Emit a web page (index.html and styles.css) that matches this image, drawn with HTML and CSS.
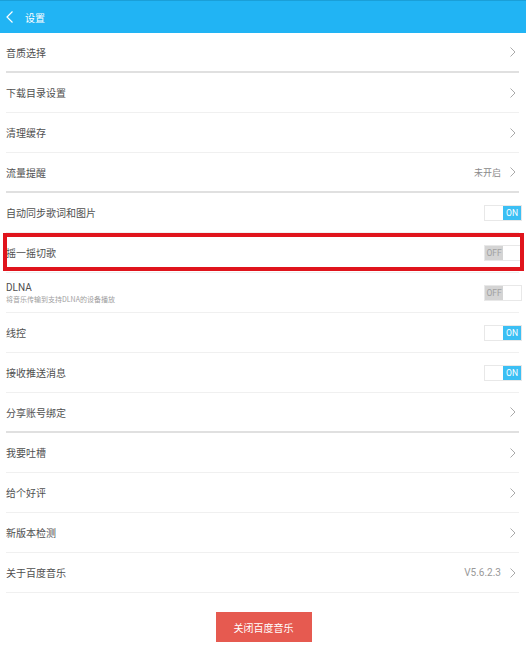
FILE: index.html
```html
<!DOCTYPE html>
<html lang="zh-CN">
<head>
  <meta charset="UTF-8">
  <meta name="viewport" content="width=device-width, initial-scale=1.0">
  <title>设置</title>
  <link rel="stylesheet" href="styles.css">
</head>
<body>
  <div class="header">
    <svg class="back" width="8" height="12" viewBox="0 0 8 12"><polyline points="6.5,0.5 1,6 6.5,11.5" fill="none" stroke="#fff" stroke-width="1.2"/></svg>
    <span class="title">设置</span>
  </div>

  <div class="settings">
    <div class="row group-end">
      <span class="label">音质选择</span>
      <svg class="chevron" width="6" height="10" viewBox="0 0 6 10"><polyline points="0.5,0.5 5,5 0.5,9.5" fill="none" stroke="#aaa" stroke-width="1"/></svg>
    </div>
    <div class="row">
      <span class="label">下载目录设置</span>
      <svg class="chevron" width="6" height="10" viewBox="0 0 6 10"><polyline points="0.5,0.5 5,5 0.5,9.5" fill="none" stroke="#aaa" stroke-width="1"/></svg>
    </div>
    <div class="row">
      <span class="label">清理缓存</span>
      <svg class="chevron" width="6" height="10" viewBox="0 0 6 10"><polyline points="0.5,0.5 5,5 0.5,9.5" fill="none" stroke="#aaa" stroke-width="1"/></svg>
    </div>
    <div class="row group-end">
      <span class="label">流量提醒</span>
      <span class="value">未开启</span>
      <svg class="chevron" width="6" height="10" viewBox="0 0 6 10"><polyline points="0.5,0.5 5,5 0.5,9.5" fill="none" stroke="#aaa" stroke-width="1"/></svg>
    </div>
    <div class="row">
      <span class="label">自动同步歌词和图片</span>
      <span class="toggle on"><span class="half"></span><span class="half">ON</span></span>
    </div>
    <div class="row marked">
      <span class="label">摇一摇切歌</span>
      <span class="toggle off"><span class="half">OFF</span><span class="half"></span></span>
      <span class="highlight"></span>
    </div>
    <div class="row">
      <div class="label-block">
        <span class="label dlna">DLNA</span>
        <span class="sub">将音乐传输到支持DLNA的设备播放</span>
      </div>
      <span class="toggle off"><span class="half">OFF</span><span class="half"></span></span>
    </div>
    <div class="row">
      <span class="label">线控</span>
      <span class="toggle on"><span class="half"></span><span class="half">ON</span></span>
    </div>
    <div class="row">
      <span class="label">接收推送消息</span>
      <span class="toggle on"><span class="half"></span><span class="half">ON</span></span>
    </div>
    <div class="row group-end">
      <span class="label">分享账号绑定</span>
      <svg class="chevron" width="6" height="10" viewBox="0 0 6 10"><polyline points="0.5,0.5 5,5 0.5,9.5" fill="none" stroke="#aaa" stroke-width="1"/></svg>
    </div>
    <div class="row">
      <span class="label">我要吐槽</span>
      <svg class="chevron" width="6" height="10" viewBox="0 0 6 10"><polyline points="0.5,0.5 5,5 0.5,9.5" fill="none" stroke="#aaa" stroke-width="1"/></svg>
    </div>
    <div class="row">
      <span class="label">给个好评</span>
      <svg class="chevron" width="6" height="10" viewBox="0 0 6 10"><polyline points="0.5,0.5 5,5 0.5,9.5" fill="none" stroke="#aaa" stroke-width="1"/></svg>
    </div>
    <div class="row">
      <span class="label">新版本检测</span>
      <svg class="chevron" width="6" height="10" viewBox="0 0 6 10"><polyline points="0.5,0.5 5,5 0.5,9.5" fill="none" stroke="#aaa" stroke-width="1"/></svg>
    </div>
    <div class="row">
      <span class="label">关于百度音乐</span>
      <span class="value version">V5.6.2.3</span>
      <svg class="chevron" width="6" height="10" viewBox="0 0 6 10"><polyline points="0.5,0.5 5,5 0.5,9.5" fill="none" stroke="#aaa" stroke-width="1"/></svg>
    </div>
  </div>

  <div class="footer">
    <button class="close-button">关闭百度音乐</button>
  </div>
</body>
</html>
```

FILE: styles.css
```css
body, html {
  margin: 0;
  padding: 0;
  background: #fff;
  font-family: "Noto Sans CJK SC", "Noto Sans", sans-serif;
}
.header {
  display: flex;
  align-items: center;
  height: 33px;
  padding-left: 6px;
  background: #21b4f4;
  border-top: 1px solid #1a9fd8;
  box-sizing: border-box;
}
.header .back {
  margin-right: 11px;
}
.header .title {
  color: #fff;
  font-size: 10px;
}
.settings {
  display: flex;
  flex-direction: column;
}
.row {
  position: relative;
  display: flex;
  align-items: center;
  height: 40px;
  margin: 0 7px 0 6px;
  border-bottom: 1px solid #f0f0f0;
  box-sizing: border-box;
}
.row.group-end {
  border-bottom: 2px solid #e0e0e0;
}
.row .label {
  flex: 1;
  color: #4f4f4f;
  font-size: 10px;
}
.label-block {
  flex: 1;
  display: flex;
  flex-direction: column;
  margin-top: 1px;
}
.label-block .label {
  line-height: 13px;
}
.label-block .dlna {
  font-family: Roboto, "Noto Sans", sans-serif;
}
.label-block .sub {
  color: #a0a0a0;
  font-size: 7px;
  line-height: 11px;
}
.row .value {
  color: #8a8a8a;
  font-size: 9px;
  margin-right: 9px;
}
.row .version {
  font-family: Roboto, "Liberation Sans", sans-serif;
  font-size: 10px;
  color: #999;
}
.chevron {
  margin-right: 3px;
}
.toggle {
  display: flex;
  width: 38px;
  height: 16px;
  margin-right: -3px;
  border: 1px solid #e8e8e8;
  box-sizing: border-box;
  font-family: Roboto, "Liberation Sans", sans-serif;
  font-size: 8.5px;
}
.toggle .half {
  flex: 1;
  display: flex;
  align-items: center;
  justify-content: center;
}
.toggle.on .half:last-child {
  background: #3bbff4;
  color: #fff;
}
.toggle.off .half:first-child {
  background: #d4d4d4;
  color: #a0a0a0;
}
.highlight {
  position: absolute;
  left: -3px;
  right: -5px;
  top: 0;
  height: 38px;
  border: 4px solid #e0141c;
  box-sizing: border-box;
}
.footer {
  display: flex;
  justify-content: center;
  padding-top: 19px;
  padding-left: 1px;
}
.close-button {
  width: 96px;
  height: 30px;
  border: none;
  border-radius: 0;
  background: #e65a50;
  color: #fff;
  font-family: "Noto Sans CJK SC", sans-serif;
  font-size: 10px;
}
```
